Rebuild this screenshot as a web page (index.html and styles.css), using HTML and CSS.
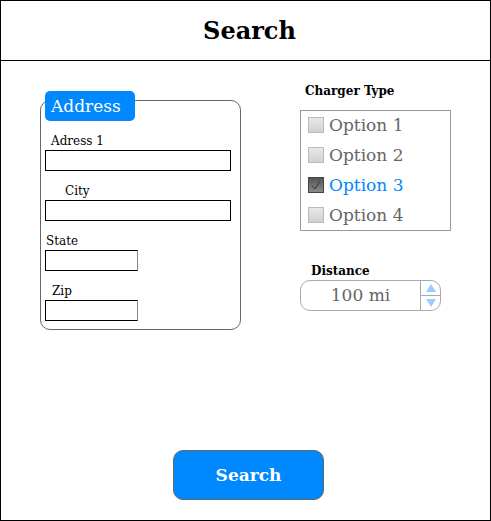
FILE: index.html
```html
<!DOCTYPE html>
<html>
<head>
<meta charset="utf-8">
<link rel="stylesheet" href="styles.css">
</head>
<body>
<div class="frame">
  <header class="header"><h1 class="title">Search</h1></header>
  <main class="main">
    <div class="row">
      <section class="address">
        <div class="address-tag">Address</div>
        <div class="field">
          <label class="lbl lbl-a1">Adress 1</label>
          <div class="input input-wide"></div>
        </div>
        <div class="field">
          <label class="lbl lbl-city">City</label>
          <div class="input input-wide"></div>
        </div>
        <div class="field">
          <label class="lbl lbl-state">State</label>
          <div class="input input-short"></div>
        </div>
        <div class="field">
          <label class="lbl lbl-zip">Zip</label>
          <div class="input input-short"></div>
        </div>
      </section>
      <section class="right">
        <div class="ct-label">Charger Type</div>
        <div class="listbox">
          <div class="opt"><span class="cb"></span><span>Option 1</span></div>
          <div class="opt"><span class="cb"></span><span>Option 2</span></div>
          <div class="opt opt-on"><span class="cb cb-on"><svg width="14" height="14" viewBox="0 0 14 14"><path d="M3 8 L6 11 L11 3" fill="none" stroke="#333" stroke-width="1"/></svg></span><span>Option 3</span></div>
          <div class="opt"><span class="cb"></span><span>Option 4</span></div>
        </div>
        <div class="dist-label">Distance</div>
        <div class="spinner">
          <div class="spin-val">100 mi</div>
          <div class="spin-btns">
            <div class="spin-up"><svg width="12" height="10" viewBox="0 0 12 10"><path d="M6 1 L11 9 L1 9 Z" fill="#99ccff"/></svg></div>
            <div class="spin-down"><svg width="12" height="10" viewBox="0 0 12 10"><path d="M1 1 L11 1 L6 9 Z" fill="#99ccff"/></svg></div>
          </div>
        </div>
      </section>
    </div>
    <button class="btn">Search</button>
  </main>
</div>
</body>
</html>
```

FILE: styles.css
```css
* { box-sizing: border-box; }
body { margin: 0; font-family: "DejaVu Serif", serif; background: #fff; }
.frame {
  width: 491px; height: 521px;
  border: 1px solid #000;
  display: flex; flex-direction: column;
}
.header {
  height: 60px; border-bottom: 1px solid #000;
  display: flex; align-items: center; justify-content: center;
  flex: none;
}
.title { margin: 0; font-size: 24px; font-weight: bold; line-height: 28px; padding-left: 8px; padding-top: 1px; }
.main { flex: 1; display: flex; flex-direction: column; }
.row { display: flex; align-items: flex-start; padding: 23px 0 0 39px; }
.address {
  position: relative;
  margin-top: 16px;
  width: 201px; height: 230px;
  border: 1px solid #666; border-radius: 10px;
  padding: 33px 0 0 4px;
}
.address-tag {
  position: absolute; left: 4px; top: -10px;
  width: 90px; height: 30px;
  background: #0088ff; color: #fff; border-radius: 5px;
  font-size: 17px; line-height: 30px; padding-left: 6px;
}
.field { margin-bottom: 13px; }
.lbl { display: block; font-size: 12px; line-height: 15px; margin-bottom: 1px; color: #000; }
.lbl-a1 { padding-left: 6px; }
.lbl-city { padding-left: 20px; }
.lbl-state { padding-left: 1px; }
.lbl-zip { padding-left: 7px; }
.input { height: 21px; border: 1px solid #000; background: #fff; }
.input-wide { width: 186px; }
.input-short { width: 93px; border-right-color: #888; }
.right { margin-left: 59px; }
.ct-label { font-size: 12px; font-weight: bold; line-height: 15px; padding-left: 5px; }
.listbox {
  margin-top: 11px; width: 151px; height: 121px;
  border: 1px solid #999;
  display: flex; flex-direction: column;
}
.opt {
  height: 30px; display: flex; align-items: center;
  padding-left: 7px; gap: 5px;
  font-family: "DejaVu Serif", serif;
  font-size: 17px; color: #666;
  padding-bottom: 1px;
}
.opt-on { color: #0088ff; }
.cb {
  width: 16px; height: 16px; border: 1px solid #bbb;
  background: linear-gradient(#e8e8e8, #d0d0d0);
  display: flex; align-items: center; justify-content: center;
}
.cb-on { background: linear-gradient(#555, #888); border-color: #444; }
.dist-label { margin-top: 33px; font-size: 12px; font-weight: bold; line-height: 15px; padding-left: 11px; }
.spinner {
  margin-top: 1px; width: 141px; height: 31px;
  border: 1px solid #aaa; border-radius: 10px;
  display: flex;
}
.spin-val { flex: 1; text-align: center; font-size: 17px; color: #666; line-height: 29px; }
.spin-btns { width: 20px; border-left: 1px solid #aaa; display: flex; flex-direction: column; }
.spin-up, .spin-down { flex: 1; display: flex; align-items: center; justify-content: center; }
.spin-up { border-bottom: 1px solid #aaa; }
.btn {
  margin-top: auto; margin-bottom: 20px; margin-left: 172px;
  align-self: flex-start;
  width: 151px; height: 50px;
  background: #0088ff; color: #fff;
  border: 1px solid #666; border-radius: 10px;
  font-family: "DejaVu Serif", serif; font-size: 17px; font-weight: bold;
}
```
